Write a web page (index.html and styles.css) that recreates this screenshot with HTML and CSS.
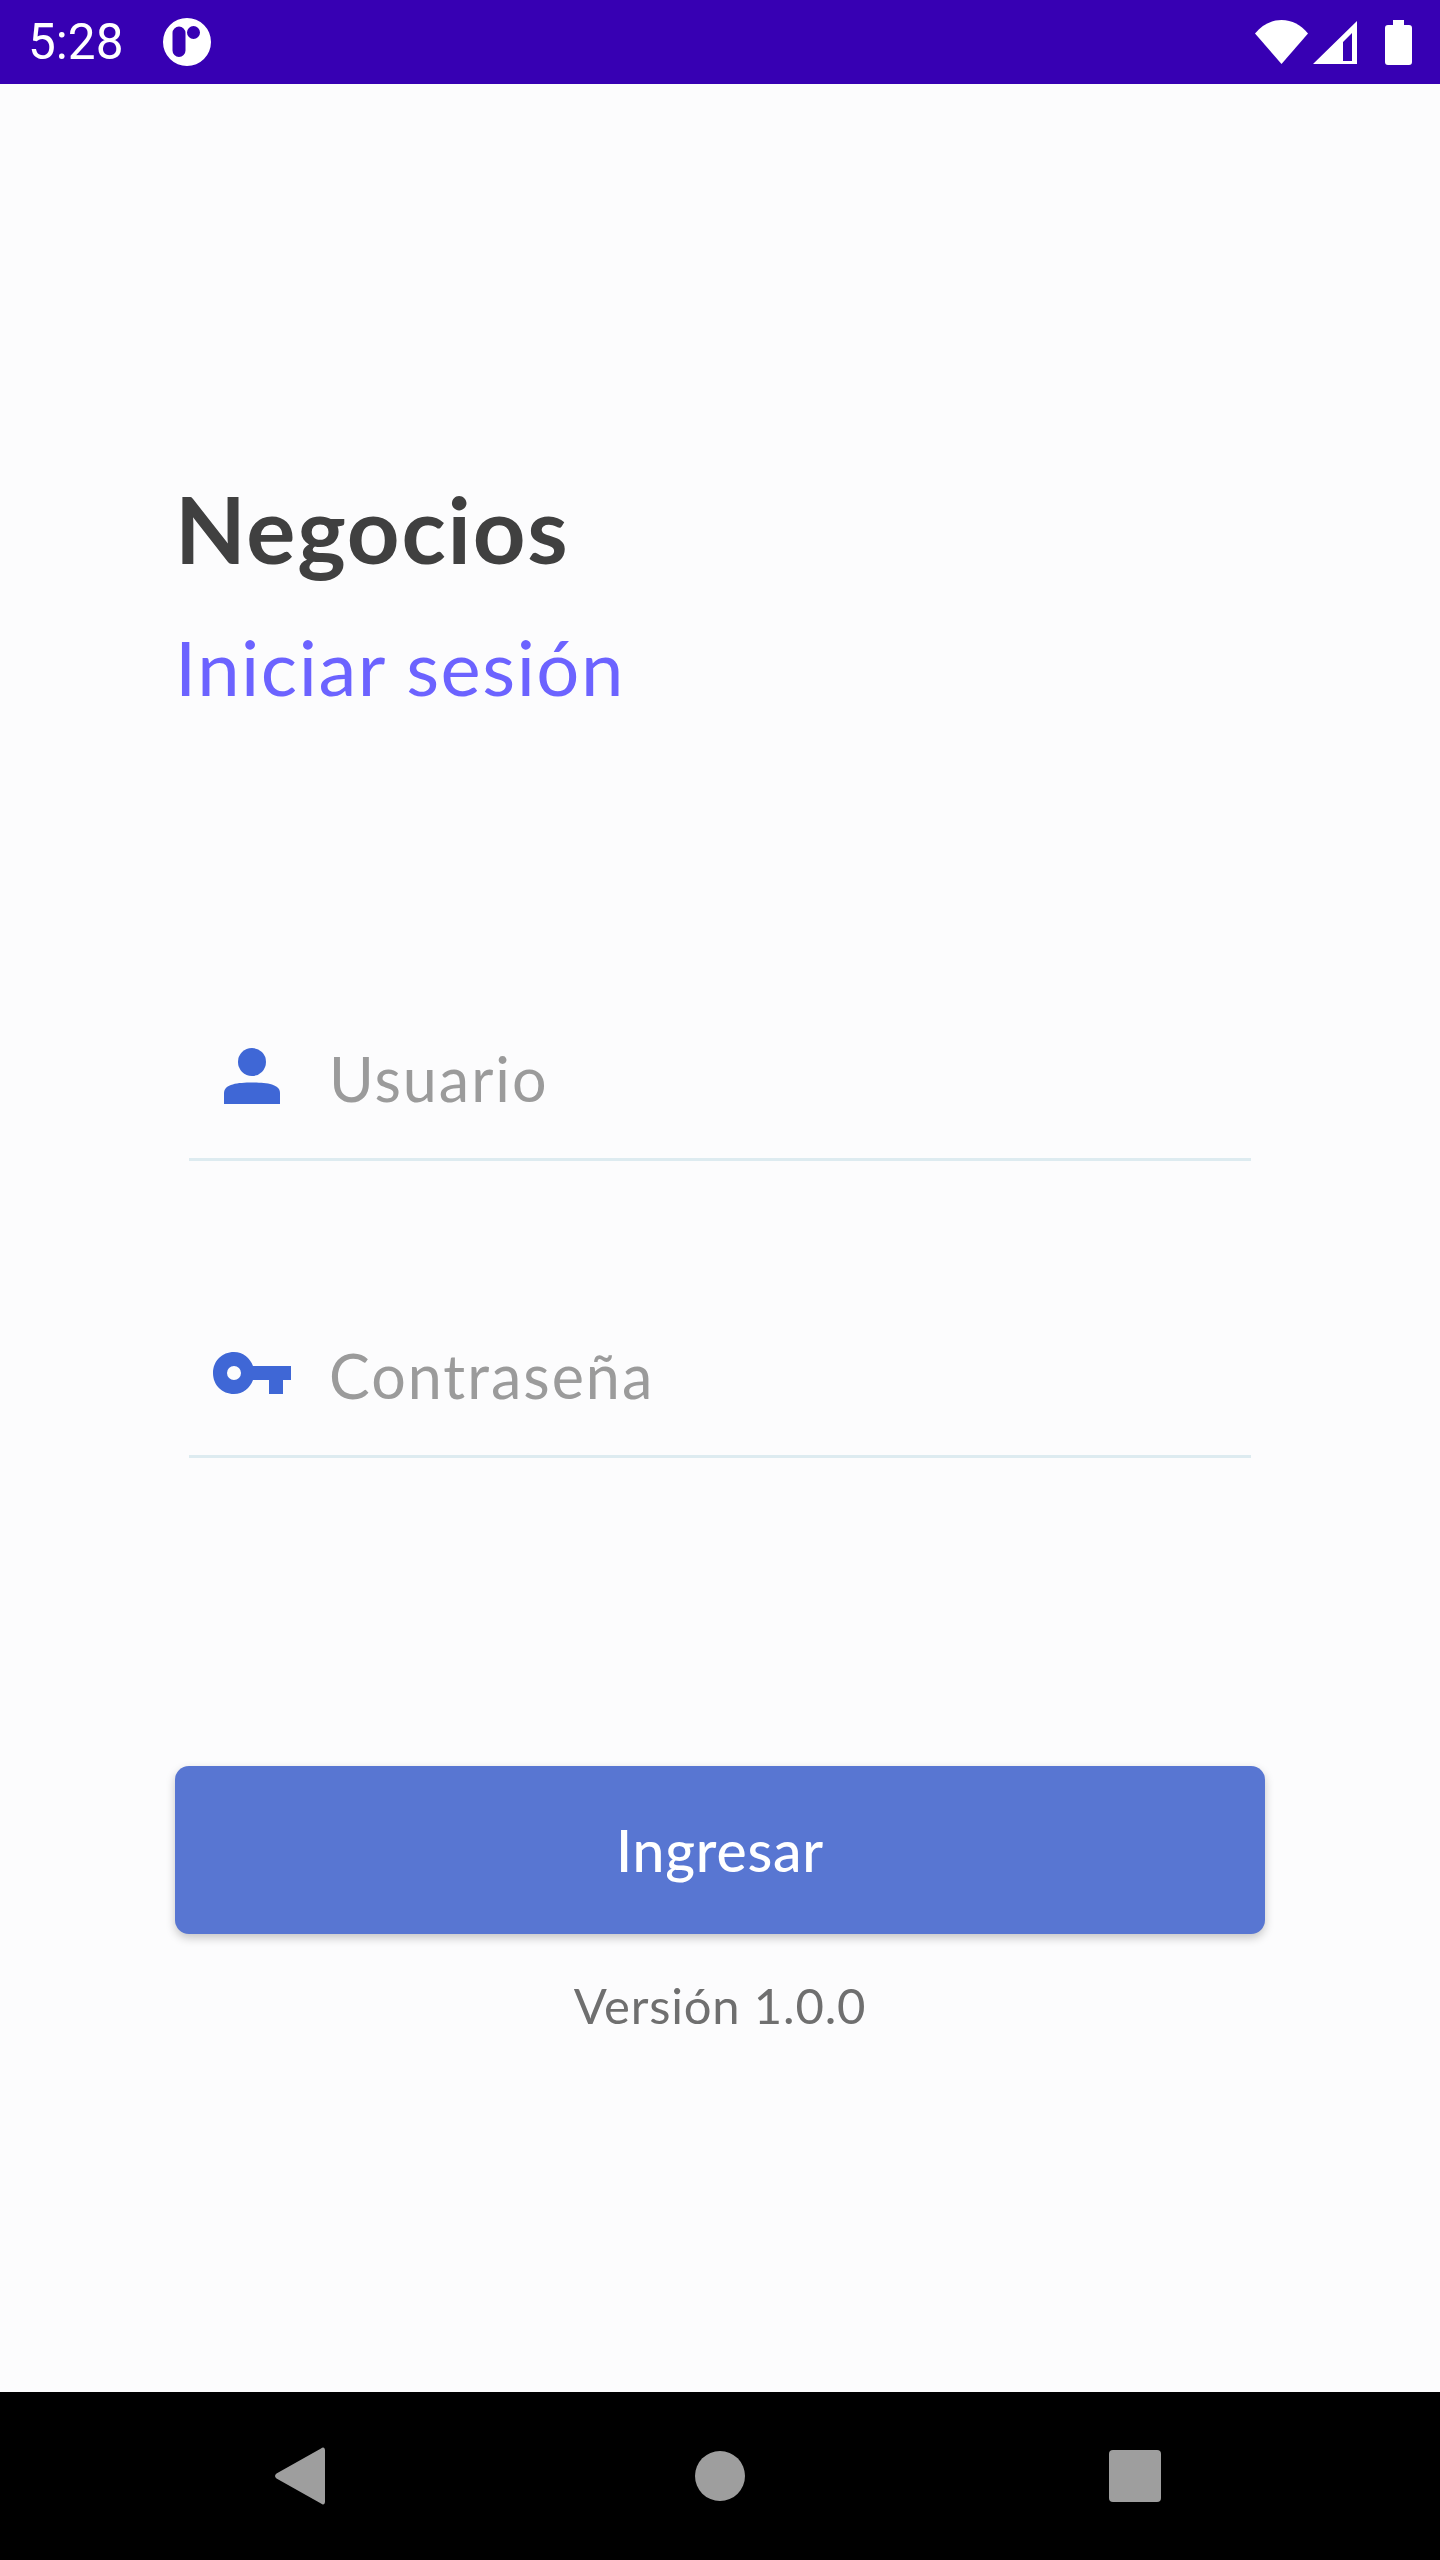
FILE: index.html
```html
<!DOCTYPE html>
<html lang="es">
<head>
  <meta charset="UTF-8" />
  <meta name="viewport" content="width=device-width, initial-scale=1.0" />
  <title>Negocios</title>
  <link rel="stylesheet" href="styles.css">
</head>
<body>
  <div class="status-bar">
    <span class="clock">5:28</span>
    <svg class="app-badge" viewBox="0 0 50 50" width="50" height="50">
      <path fill="#fff" fill-rule="evenodd" d="M25 1a24 24 0 1 0 0 48a24 24 0 1 0 0-48zM17 9.500a6.500 6.500 0 0 1 6.500 6.500v17.500a6.500 6.500 0 0 1-13 0v-17.500a6.500 6.500 0 0 1 6.500-6.500zM31.500 9a6.500 6.500 0 1 1 0 13a6.500 6.500 0 1 1 0-13z"/>
    </svg>
    <div class="status-icons">
      <svg viewBox="0 0 54 45" width="54" height="45">
        <path fill="#fff" d="M1 13.500C8 5 17 0 27.500 0S47 5 54 13.500L27.500 44z"/>
      </svg>
      <svg viewBox="0 0 45 45" width="45" height="45">
        <path fill="#fff" fill-rule="evenodd" d="M44 1v43H0zM39 13l-9 9v19h9z"/>
      </svg>
      <svg class="battery" viewBox="0 0 27 45" width="27" height="45">
        <path fill="#fff" d="M8 0h11v5h5a3 3 0 0 1 3 3v34a3 3 0 0 1-3 3H3a3 3 0 0 1-3-3V8a3 3 0 0 1 3-3h5z"/>
      </svg>
    </div>
  </div>

  <main class="login">
    <header class="heading">
      <h1>Negocios</h1>
      <h2>Iniciar sesión</h2>
    </header>

    <form class="login-form">
      <div class="field">
        <span class="field-icon">
          <svg viewBox="0 0 56 56" width="56" height="56">
            <circle cx="28" cy="14" r="14" fill="#3f67d6"/>
            <path fill="#3f67d6" d="M0 56V45c0-9 14-10.500 28-10.500S56 36 56 45v11z"/>
          </svg>
        </span>
        <span class="placeholder">Usuario</span>
      </div>
      <div class="field">
        <span class="field-icon">
          <svg viewBox="0 0 78 42" width="78" height="42">
            <path fill="#3f67d6" fill-rule="evenodd" d="M21 0c9 0 16 6 19 14h38v14h-8v14H56V28H40c-3 8-10 14-19 14C9 42 0 33 0 21S9 0 21 0zM21 14a7 7 0 1 0 0 14a7 7 0 1 0 0-14z"/>
          </svg>
        </span>
        <span class="placeholder">Contraseña</span>
      </div>
      <button type="button" class="btn">Ingresar</button>
      <p class="version">Versión 1.0.0</p>
    </form>
  </main>

  <nav class="nav-bar">
    <svg viewBox="0 0 50 58" width="50" height="58">
      <path fill="#9e9e9e" d="M46 1.500c2-2 4-1 4 2v51c0 3-2 4-4 2L1.500 31.500c-2-1.500-2-3.500 0-5z"/>
    </svg>
    <span class="nav-home"></span>
    <span class="nav-recent"></span>
  </nav>
</body>
</html>
```

FILE: styles.css
```css
* { box-sizing: border-box; margin: 0; padding: 0; }
body {
  font-family: 'Lato', sans-serif;
  background: #fcfcfd;
  width: 1440px;
  height: 2560px;
  display: flex;
  flex-direction: column;
}

.status-bar {
  height: 84px;
  background: #3700b3;
  color: #fff;
  display: flex;
  align-items: center;
  padding: 0 28px;
}
.clock {
  font-family: 'Roboto', sans-serif;
  font-size: 49.5px;
  width: 134px;
}
.status-icons {
  margin-left: auto;
  display: flex;
  align-items: center;
  gap: 5px;
}
.status-icons svg { display: block; }
.status-icons .battery { margin-left: 22px; }

.login {
  flex: 1;
  padding: 0 175px;
}
.heading { padding-top: 390px; }
h1 {
  font-size: 92px;
  font-weight: 700;
  line-height: 110px;
  letter-spacing: 1.8px;
  color: #404040;
}
h2 {
  font-size: 76px;
  font-weight: 400;
  line-height: 90px;
  letter-spacing: 1.5px;
  color: #6c63ff;
  margin-top: 38px;
}

.login-form { padding-top: 312px; }
.field {
  margin: 0 14px;
  height: 137px;
  border-bottom: 3px solid #ddebf0;
  display: flex;
  align-items: center;
  padding-bottom: 25px;
}
.field + .field { margin-top: 160px; }
.field-icon {
  width: 143px;
  display: flex;
  justify-content: center;
  margin-left: -4px;
  margin-right: 1px;
  padding-right: 10px;
  padding-bottom: 6px;
}
.placeholder {
  font-size: 61px;
  letter-spacing: 2px;
  color: #9b9b9b;
}

.btn {
  display: block;
  width: 100%;
  height: 168px;
  margin-top: 308px;
  border: none;
  border-radius: 14px;
  background: #5876d2;
  box-shadow: 0 4px 10px rgba(0,0,0,0.22);
  color: #fff;
  font-family: inherit;
  font-size: 57px;
  font-weight: 500;
  letter-spacing: 0.8px;
}
.version {
  margin-top: 41px;
  text-align: center;
  font-size: 49px;
  line-height: 60px;
  letter-spacing: 0.8px;
  color: #6f6f6f;
}

.nav-bar {
  height: 168px;
  background: #000;
  display: grid;
  grid-template-columns: 600px 240px 590px;
  align-items: center;
  justify-items: center;
}
.nav-home {
  width: 50px;
  height: 50px;
  border-radius: 50%;
  background: #9e9e9e;
}
.nav-recent {
  width: 52px;
  height: 52px;
  border-radius: 4px;
  background: #9e9e9e;
}
```
